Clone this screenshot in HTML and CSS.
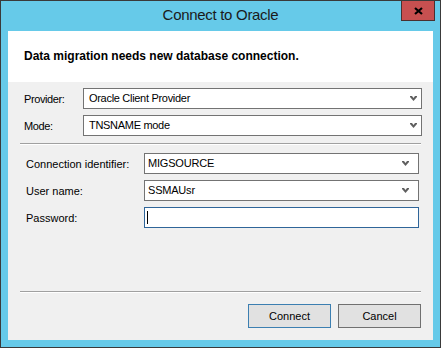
FILE: index.html
```html
<!DOCTYPE html>
<html>
<head>
<meta charset="utf-8">
<link rel="stylesheet" href="styles.css">
</head>
<body>
<div class="window">
  <div class="titlebar">
    <span class="spacer"></span>
    <span class="title">Connect to Oracle</span>
    <div class="close">
      <svg width="9" height="8" viewBox="0 0 9 8"><path d="M1 1 L8 7 M8 1 L1 7" stroke="#000" stroke-width="2.2" fill="none"/></svg>
    </div>
  </div>
  <div class="client">
    <div class="header">Data migration needs new database connection.</div>
    <div class="body">
      <div class="group top">
        <div class="row">
          <span class="label">Provider:</span>
          <div class="combo">Oracle Client Provider<svg class="arrow" width="7" height="5" viewBox="0 0 7 5"><path d="M0 0 H2 L3.5 2 L5 0 H7 V1 L3.5 5 L0 1 Z" fill="#5f5f5f"/></svg></div>
        </div>
        <div class="row">
          <span class="label">Mode:</span>
          <div class="combo">TNSNAME mode<svg class="arrow" width="7" height="5" viewBox="0 0 7 5"><path d="M0 0 H2 L3.5 2 L5 0 H7 V1 L3.5 5 L0 1 Z" fill="#5f5f5f"/></svg></div>
        </div>
      </div>
      <hr class="sep first">
      <div class="group lower">
        <div class="row">
          <span class="label">Connection identifier:</span>
          <div class="combo">MIGSOURCE<svg class="arrow" width="7" height="5" viewBox="0 0 7 5"><path d="M0 0 H2 L3.5 2 L5 0 H7 V1 L3.5 5 L0 1 Z" fill="#5f5f5f"/></svg></div>
        </div>
        <div class="row">
          <span class="label">User name:</span>
          <div class="combo">SSMAUsr<svg class="arrow" width="7" height="5" viewBox="0 0 7 5"><path d="M0 0 H2 L3.5 2 L5 0 H7 V1 L3.5 5 L0 1 Z" fill="#5f5f5f"/></svg></div>
        </div>
        <div class="row">
          <span class="label">Password:</span>
          <div class="combo input focused"><span class="caret"></span></div>
        </div>
      </div>
      <hr class="sep second">
      <div class="buttons">
        <div class="btn default">Connect</div>
        <div class="btn">Cancel</div>
      </div>
    </div>
  </div>
</div>
</body>
</html>
```

FILE: styles.css
```css
html, body {
  margin: 0;
  padding: 0;
  background: #ffffff;
}

.window {
  box-sizing: border-box;
  width: 441px;
  height: 348px;
  border: 1px solid #3a3a3a;
  background: #66cae9;
  display: flex;
  flex-direction: column;
  font-family: "Liberation Sans", Arial, sans-serif;
  font-size: 11px;
  color: #000;
}

.titlebar {
  height: 30px;
  display: grid;
  grid-template-columns: 1fr auto 1fr;
}

.title {
  align-self: start;
  margin-top: 5px;
  font-size: 15px;
  line-height: 18px;
  letter-spacing: -0.3px;
  color: #1b1b1b;
}

.close {
  justify-self: end;
  align-self: start;
  box-sizing: border-box;
  width: 34px;
  height: 20px;
  margin-right: 5px;
  background: #c75050;
  border: 1px solid #4a3030;
  border-top: none;
  display: flex;
  align-items: center;
  justify-content: center;
}

.client {
  margin: 0 7px 7px 7px;
  height: 309px;
  background: #f0f0f0;
  display: flex;
  flex-direction: column;
}

.header {
  height: 51px;
  box-sizing: border-box;
  background: #ffffff;
  padding: 18px 0 0 16px;
  font-size: 12px;
  line-height: 14px;
  font-weight: bold;
}

.body {
  flex: 1;
  display: flex;
  flex-direction: column;
  padding: 0 12px 12px 12px;
}

.group {
  display: flex;
  flex-direction: column;
  gap: 6px;
}

.row {
  display: flex;
  align-items: center;
  height: 21px;
}

.combo {
  box-sizing: border-box;
  height: 21px;
  background: #ffffff;
  border: 1px solid #737373;
  display: flex;
  align-items: center;
  line-height: 13px;
  white-space: nowrap;
}

.arrow {
  margin-left: auto;
}

.top {
  margin-top: 6px;
  padding-left: 4px;
  margin-right: -1px;
}

.top .label {
  width: 59px;
  letter-spacing: -0.4px;
}

.top .combo {
  flex: 1;
  padding: 0 4px 0 5px;
  letter-spacing: -0.3px;
}

.lower {
  margin-top: 8px;
  padding-left: 6px;
}

.lower .label {
  width: 118px;
}

.lower .combo {
  width: 275px;
  padding: 0 9px 0 3px;
  letter-spacing: -0.2px;
}

.lower .combo.focused {
  border-color: #2f6599;
  padding-left: 2px;
}

.caret {
  display: block;
  width: 1px;
  height: 13px;
  background: #000;
}

.sep {
  margin: 0;
  height: 0;
  border: none;
  border-top: 1px solid #a0a0a0;
  border-bottom: 1px solid #ffffff;
}

.sep.first {
  margin-top: 7px;
}

.sep.second {
  margin-top: 63px;
}

.buttons {
  margin-top: 11px;
  display: flex;
  justify-content: flex-end;
  gap: 7px;
}

.btn {
  box-sizing: border-box;
  width: 83px;
  height: 24px;
  background: #e1e1e1;
  border: 1px solid #707070;
  display: flex;
  align-items: center;
  justify-content: center;
  line-height: 13px;
}

.btn.default {
  border-color: #3c7fb1;
}
```
